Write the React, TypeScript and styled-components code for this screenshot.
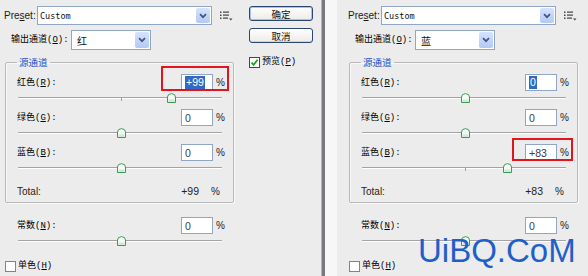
import React from "react";
import styled, { createGlobalStyle } from "styled-components";

const GlobalStyle = createGlobalStyle`
  html, body {
    margin: 0;
    padding: 0;
    background: #ececec;
  }
  body {
    font-family: "Liberation Sans", Arial, sans-serif;
  }
`;

const Page = styled.div`
  position: relative;
  width: 588px;
  height: 276px;
  overflow: hidden;
  display: flex;
  background: #ececec;
`;

const Dialog = styled.div<{ $width: number }>`
  position: relative;
  flex: 0 0 ${(p) => p.$width}px;
  display: flex;
  overflow: hidden;
`;

const Divider = styled.div`
  flex: 0 0 19px;
  border-left: 3px solid #77797c;
  box-shadow: -1px 0 0 #b4b4b4;
  background: linear-gradient(to right, #f7f7f7 12px, #ececec 12px);
`;

const MainCol = styled.div`
  flex: 0 0 240px;
  display: flex;
  flex-direction: column;
`;

const SideCol = styled.div`
  flex: 0 0 64px;
  margin-left: 9px;
  display: flex;
  flex-direction: column;
`;

const PresetRow = styled.div`
  display: flex;
  align-items: center;
  height: 19px;
  margin-top: 6px;
`;

const PresetLabel = styled.span`
  box-sizing: border-box;
  width: 37px;
  padding-left: 4px;
  font-size: 10px;
  color: #1a1a1a;
`;

const OutputRow = styled.div`
  display: flex;
  align-items: center;
  height: 20px;
  margin-top: 5px;
`;

const CjkLabel = styled.span<{ $width?: number; $pad?: number }>`
  box-sizing: border-box;
  ${(p) => (p.$width ? `width: ${p.$width}px;` : "")}
  padding-left: ${(p) => p.$pad ?? 0}px;
  font-family: "Liberation Mono", "Noto Sans CJK SC", monospace;
  font-size: 9px;
  line-height: 12px;
  color: #000;
  white-space: nowrap;
`;

const Mn = styled.u`
  text-underline-offset: 1px;
`;

const Select = styled.div<{ $width: number }>`
  box-sizing: border-box;
  width: ${(p) => p.$width}px;
  height: 100%;
  display: flex;
  align-items: center;
  background: #fff;
  border: 1px solid #8fa6c4;
`;

const SelectText = styled.span<{ $mono?: boolean; $pad: number }>`
  flex: 1;
  padding-left: ${(p) => p.$pad}px;
  font-family: ${(p) =>
    p.$mono ? `"DejaVu Sans Mono", monospace` : `"Noto Sans CJK SC", sans-serif`};
  font-size: ${(p) => (p.$mono ? "8.5px" : "10px")};
  color: #111;
`;

const ArrowBtn = styled.span`
  width: 14px;
  height: calc(100% - 2px);
  margin-right: 1px;
  display: flex;
  align-items: center;
  justify-content: center;
  border-radius: 2px;
  background: linear-gradient(#d6e3fd, #b4c8f4);
`;

const MenuIcon = styled.svg`
  margin-left: 8px;
`;

const Group = styled.fieldset`
  box-sizing: border-box;
  width: 229px;
  min-width: 0;
  margin: 6px 0 0 5px;
  padding: 0 0 5px 0;
  border: 1px solid #b9b9b9;
  border-radius: 2px;
  box-shadow: 1px 1px 0 #f8f8f8, inset 1px 1px 0 #f8f8f8;
`;

const Legend = styled.legend`
  margin-left: 11px;
  padding: 0 2px;
  font-family: "Noto Sans CJK SC", sans-serif;
  font-size: 9.5px;
  line-height: 12px;
  color: #2151c9;
`;

const Row = styled.div<{ $gap: number }>`
  margin-top: ${(p) => p.$gap}px;
  width: 227px;
`;

const RowTop = styled.div`
  display: flex;
  align-items: center;
  height: 17px;
`;

const Field = styled.div`
  box-sizing: border-box;
  width: 32px;
  height: 17px;
  display: flex;
  align-items: center;
  padding-left: 3px;
  background: #fff;
  border: 1px solid #8fa6c4;
  font-size: 10.5px;
  color: #3a3a48;
`;

const Selected = styled.span`
  background: #316ac5;
  color: #fff;
  padding: 0 1px;
  line-height: 13px;
`;

const Pct = styled.span<{ $gap: number; $width: number }>`
  box-sizing: border-box;
  width: ${(p) => p.$width}px;
  margin-left: ${(p) => p.$gap}px;
  font-size: 10px;
  color: #222;
`;

const Slider = styled.div`
  position: relative;
  width: 204px;
  height: 10px;
  margin: 2px 0 0 12px;
`;

const Track = styled.div`
  position: absolute;
  left: 0;
  right: 0;
  top: 4px;
  height: 1px;
  border-radius: 1px;
  background: #a3a3a3;
  box-shadow: 0 1px 0 #ffffff;
`;

const Tick = styled.div`
  position: absolute;
  left: 103px;
  top: 5px;
  width: 1px;
  height: 3px;
  background: #a0a0a0;
`;

const Thumb = styled.svg`
  position: absolute;
  top: 0;
`;

const TotalRow = styled.div`
  display: flex;
  align-items: center;
  height: 12px;
  margin-top: 12px;
  padding-left: 11px;
  font-size: 10px;
  color: #222;
`;

const TotalLabel = styled.span`
  flex: 1;
`;

const TotalValue = styled.span`
  width: 40px;
  text-align: right;
  font-size: 10.5px;
`;

const ConstBlock = styled.div`
  margin-left: 6px;
`;

const CheckRow = styled.div<{ $top: number; $left: number }>`
  display: flex;
  align-items: center;
  gap: 2px;
  margin-top: ${(p) => p.$top}px;
  margin-left: ${(p) => p.$left}px;
`;

const Box = styled.span<{ $dark?: boolean }>`
  box-sizing: border-box;
  width: 11px;
  height: 11px;
  display: flex;
  align-items: center;
  justify-content: center;
  background: #fff;
  border: 1px solid ${(p) => (p.$dark ? "#1c5180" : "#7d858c")};
`;

const Button = styled.div<{ $top: number; $default?: boolean }>`
  box-sizing: border-box;
  height: 15px;
  margin-top: ${(p) => p.$top}px;
  display: flex;
  align-items: center;
  justify-content: center;
  border: 1px solid #2a4673;
  border-radius: 3px;
  background: linear-gradient(#ffffff, #ecebe6);
  box-shadow: ${(p) => (p.$default ? "inset 0 0 0 1px #a9c1ee" : "inset 0 -1px 0 #d6d0c5")};
  font-family: "Noto Sans CJK SC", sans-serif;
  font-size: 9.5px;
  color: #111;
`;

const Highlight = styled.div<{ $x: number; $y: number; $w: number; $h: number }>`
  position: absolute;
  left: ${(p) => p.$x}px;
  top: ${(p) => p.$y}px;
  width: ${(p) => p.$w}px;
  height: ${(p) => p.$h}px;
  box-sizing: border-box;
  border: 2px solid #e2141c;
`;

const Watermark = styled.div`
  position: absolute;
  left: 418px;
  top: 239px;
  font-family: "Liberation Sans", Arial, sans-serif;
  font-size: 33px;
  line-height: 24px;
  color: #1f5fcb;
  white-space: nowrap;
`;

const Chevron = () => (
  <svg width="8" height="6" viewBox="0 0 8 6">
    <path d="M1 1.2 L4 4.2 L7 1.2" fill="none" stroke="#3f5682" strokeWidth="1.7" />
  </svg>
);

const ThumbShape = ({ pos }: { pos: number }) => (
  <Thumb width="9" height="10" viewBox="0 0 9 10" style={{ left: pos - 4.5 }}>
    <path
      d="M0.5 4 Q0.5 1 4.5 0.6 Q8.5 1 8.5 4 L8.5 9.5 L0.5 9.5 Z"
      fill="#f4fbf4"
      stroke="#3c9a58"
      strokeWidth="1"
    />
    <rect x="1.5" y="6.5" width="6" height="2.5" fill="#cfe9d3" />
  </Thumb>
);

type Channel = {
  name: string;
  key: string;
  value: number;
  selected?: boolean;
};

const ChannelRow = ({ ch, gap }: { ch: Channel; gap: number }) => {
  const text = ch.value > 0 ? `+${ch.value}` : `${ch.value}`;
  return (
    <Row $gap={gap}>
      <RowTop>
        <CjkLabel $pad={11} style={{ flex: 1 }}>
          {ch.name}(<Mn>{ch.key}</Mn>):
        </CjkLabel>
        <Field>{ch.selected ? <Selected>{text}</Selected> : text}</Field>
        <Pct $gap={3} $width={17}>%</Pct>
      </RowTop>
      <Slider>
        <Track />
        <Tick />
        <ThumbShape pos={103 + ch.value * 0.51} />
      </Slider>
    </Row>
  );
};

const MenuGlyph = () => (
  <MenuIcon width="13" height="10" viewBox="0 0 13 10">
    <rect x="0" y="0.5" width="1.5" height="1.5" fill="#444" />
    <rect x="0" y="3.5" width="1.5" height="1.5" fill="#444" />
    <rect x="0" y="6.5" width="1.5" height="1.5" fill="#444" />
    <rect x="3" y="0.5" width="6" height="1.2" fill="#444" />
    <rect x="3" y="3.5" width="6" height="1.2" fill="#444" />
    <rect x="3" y="6.5" width="5" height="1.2" fill="#444" />
    <path d="M9 7.5 L12.5 7.5 L10.75 9.5 Z" fill="#444" />
  </MenuIcon>
);

const MixerPanel = ({
  output,
  channels,
  total,
}: {
  output: string;
  channels: Channel[];
  total: number;
}) => (
  <MainCol>
    <PresetRow>
      <PresetLabel>
        Pre<Mn>s</Mn>et:
      </PresetLabel>
      <Select $width={175}>
        <SelectText $mono $pad={2}>
          Custom
        </SelectText>
        <ArrowBtn>
          <Chevron />
        </ArrowBtn>
      </Select>
      <MenuGlyph />
    </PresetRow>
    <OutputRow>
      <CjkLabel $width={71} $pad={11}>
        输出通道(<Mn>O</Mn>):
      </CjkLabel>
      <Select $width={80}>
        <SelectText $pad={5}>{output}</SelectText>
        <ArrowBtn>
          <Chevron />
        </ArrowBtn>
      </Select>
    </OutputRow>
    <Group>
      <Legend>源通道</Legend>
      {channels.map((ch) => (
        <ChannelRow key={ch.key} ch={ch} gap={6} />
      ))}
      <TotalRow>
        <TotalLabel>Total:</TotalLabel>
        <TotalValue>+{total}</TotalValue>
        <Pct $gap={12} $width={22}>%</Pct>
      </TotalRow>
    </Group>
    <ConstBlock>
      <ChannelRow ch={{ name: "常数", key: "N", value: 0 }} gap={14} />
    </ConstBlock>
    <CheckRow $top={14} $left={5}>
      <Box />
      <CjkLabel>
        单色(<Mn>H</Mn>)
      </CjkLabel>
    </CheckRow>
  </MainCol>
);

export default function App() {
  return (
    <Page>
      <GlobalStyle />
      <Dialog $width={322}>
        <MixerPanel
          output="红"
          total={99}
          channels={[
            { name: "红色", key: "R", value: 99, selected: true },
            { name: "绿色", key: "G", value: 0 },
            { name: "蓝色", key: "B", value: 0 },
          ]}
        />
        <SideCol>
          <Button $top={6} $default>
            确定
          </Button>
          <Button $top={7}>取消</Button>
          <CheckRow $top={13} $left={0}>
            <Box $dark>
              <svg width="9" height="9" viewBox="0 0 9 9">
                <path d="M1.5 4.5 L3.6 6.8 L7.6 1.8" fill="none" stroke="#22a322" strokeWidth="1.8" />
              </svg>
            </Box>
            <CjkLabel>
              预览(<Mn>P</Mn>)
            </CjkLabel>
          </CheckRow>
        </SideCol>
        <Highlight $x={161} $y={66} $w={68} $h={25} />
      </Dialog>
      <Divider />
      <Dialog $width={244}>
        <MixerPanel
          output="蓝"
          total={83}
          channels={[
            { name: "红色", key: "R", value: 0, selected: true },
            { name: "绿色", key: "G", value: 0 },
            { name: "蓝色", key: "B", value: 83 },
          ]}
        />
        <Highlight $x={168} $y={138} $w={61} $h={23} />
      </Dialog>
      <Watermark>UiBQ.CoM</Watermark>
    </Page>
  );
}
